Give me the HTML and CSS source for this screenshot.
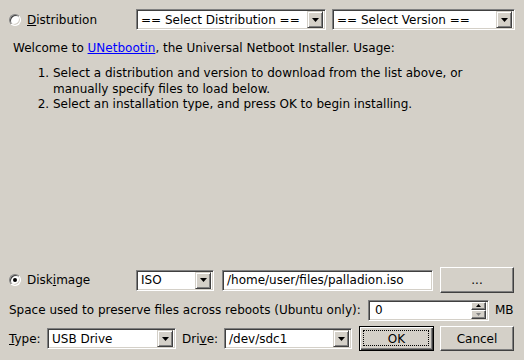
FILE: index.html
```html
<!DOCTYPE html>
<html>
<head>
<meta charset="utf-8">
<link rel="stylesheet" href="styles.css">
</head>
<body>
<div class="app">
  <div class="row row-dist">
    <label class="radio-label"><span class="radio"></span><span><u>D</u>istribution</span></label>
    <div class="combo w-dist">
      <span class="combo-text">== Select Distribution ==</span>
      <span class="combo-btn"><svg width="7" height="4" viewBox="0 0 7 4"><path d="M0 0H7L3.5 4Z" fill="#000"/></svg></span>
    </div>
    <div class="combo w-ver">
      <span class="combo-text">== Select Version ==</span>
      <span class="combo-btn"><svg width="7" height="4" viewBox="0 0 7 4"><path d="M0 0H7L3.5 4Z" fill="#000"/></svg></span>
    </div>
  </div>

  <div class="intro">
    <p>Welcome to <a class="link" href="#">UNetbootin</a>, the Universal Netboot Installer. Usage:</p>
    <ol>
      <li>Select a distribution and version to download from the list above, or manually specify files to load below.</li>
      <li>Select an installation type, and press OK to begin installing.</li>
    </ol>
  </div>

  <div class="spacer"></div>

  <div class="row row-disk">
    <label class="radio-label"><span class="radio checked"></span><span>Disk<u>i</u>mage</span></label>
    <div class="combo w-iso">
      <span class="combo-text">ISO</span>
      <span class="combo-btn"><svg width="7" height="4" viewBox="0 0 7 4"><path d="M0 0H7L3.5 4Z" fill="#000"/></svg></span>
    </div>
    <div class="field w-path">/home/user/files/palladion.iso</div>
    <div class="button w-btn">...</div>
  </div>

  <div class="row row-space">
    <span class="space-label">Space used to preserve files across reboots (Ubuntu only):</span>
    <div class="spin">
      <span class="spin-text">0</span>
      <span class="spin-btns">
        <span class="spin-btn"><svg width="5" height="3" viewBox="0 0 5 3"><path d="M0 3H5L2.5 0Z" fill="#000"/></svg></span>
        <span class="spin-btn"><svg width="5" height="3" viewBox="0 0 5 3"><path d="M0 0H5L2.5 3Z" fill="#808080"/></svg></span>
      </span>
    </div>
    <span class="mb">MB</span>
  </div>

  <div class="row row-type">
    <span class="type-label"><u>T</u>ype:</span>
    <div class="combo w-usb">
      <span class="combo-text">USB Drive</span>
      <span class="combo-btn"><svg width="7" height="4" viewBox="0 0 7 4"><path d="M0 0H7L3.5 4Z" fill="#000"/></svg></span>
    </div>
    <span class="drive-label">Dri<u>v</u>e:</span>
    <div class="combo w-drive">
      <span class="combo-text">/dev/sdc1</span>
      <span class="combo-btn"><svg width="7" height="4" viewBox="0 0 7 4"><path d="M0 0H7L3.5 4Z" fill="#000"/></svg></span>
    </div>
    <div class="button default w-ok">OK</div>
    <div class="button w-cancel">Cancel</div>
  </div>
</div>
</body>
</html>
```

FILE: styles.css
```css
* { box-sizing: border-box; }
html, body { margin: 0; padding: 0; }
body {
  background: #d4d0c8;
  font-family: "DejaVu Sans", sans-serif;
  font-size: 12px;
  color: #000;
  width: 524px;
  height: 360px;
  overflow: hidden;
}
.app {
  display: flex;
  flex-direction: column;
  height: 360px;
  padding: 9px 10px 9px 9px;
}
.row { display: flex; align-items: center; flex: none; }
.row-dist { height: 21px; }

.radio-label {
  width: 127px;
  flex: none;
  display: flex;
  align-items: center;
  gap: 6px;
  line-height: 14px;
}
.radio {
  position: relative;
  width: 12px;
  height: 12px;
  border-radius: 50%;
  background: #fff;
  border: 1px solid;
  border-color: #808080 #fff #fff #808080;
  box-shadow: inset 1px 1px 0 #404040, inset -1px -1px 0 #d4d0c8;
  flex: none;
}
.radio.checked::after {
  content: "";
  position: absolute;
  left: 3px;
  top: 3px;
  width: 4px;
  height: 4px;
  border-radius: 50%;
  background: #000;
}

.combo, .field, .spin {
  height: 21px;
  background: #fff;
  border: 1px solid;
  border-color: #808080 #fff #fff #808080;
  box-shadow: inset 1px 1px 0 #404040, inset -1px -1px 0 #d4d0c8;
  flex: none;
  display: flex;
  align-items: center;
  padding: 2px;
  white-space: nowrap;
  overflow: hidden;
}
.combo-text, .spin-text {
  flex: 1;
  padding-left: 2px;
  overflow: hidden;
}
.combo-btn {
  width: 16px;
  height: 17px;
  flex: none;
  background: #d4d0c8;
  border: 1px solid;
  border-color: #d4d0c8 #404040 #404040 #d4d0c8;
  box-shadow: inset 1px 1px 0 #fff, inset -1px -1px 0 #808080;
  display: flex;
  align-items: center;
  justify-content: center;
}
.combo-btn svg { display: block; }

.w-dist { width: 190px; }
.w-ver { width: 183px; margin-left: 6px; }

.intro { margin-top: 11px; padding-left: 4px; flex: none; }
.intro p { margin: 0; line-height: 15px; }
.link { color: #0000ff; text-decoration: underline; }
.intro ol { margin: 10px 0 0; padding-left: 40px; line-height: 15.5px; }

.spacer { flex: 1; }

.row-disk { height: 26px; }
.w-iso { width: 78px; }
.w-path { width: 211px; margin-left: 8px; padding-left: 4px; }
.button {
  height: 26px;
  flex: none;
  background: #d4d0c8;
  border: 1px solid;
  border-color: #fff #404040 #404040 #fff;
  box-shadow: inset -1px -1px 0 #808080;
  display: flex;
  align-items: center;
  justify-content: center;
  position: relative;
}
.w-btn { width: 74px; margin-left: 7px; }

.row-space { height: 22px; margin-top: 6px; }
.space-label { width: 359px; flex: none; }
.spin { width: 121px; padding-right: 2px; }
.spin-text { padding-left: 4px; }
.spin-btns { display: flex; flex-direction: column; width: 15px; height: 17px; flex: none; }
.spin-btn {
  flex: 1;
  background: #d4d0c8;
  border: 1px solid;
  border-color: #fff #404040 #404040 #fff;
  box-shadow: inset -1px -1px 0 #808080;
  display: flex;
  align-items: center;
  justify-content: center;
}
.spin-btn svg { display: block; }
.mb { margin-left: 6px; }

.row-type { height: 25px; margin-top: 5px; }
.type-label { width: 38px; flex: none; }
.w-usb { width: 129px; }
.drive-label { width: 42px; margin-left: 6px; flex: none; }
.w-drive { width: 128px; }
.w-ok { width: 75px; height: 25px; margin-left: 7px; }
.w-cancel { width: 74px; height: 25px; margin-left: 6px; }
.button.default {
  border: 1px solid #000;
  box-shadow: inset 1px 1px 0 #fff, inset -1px -1px 0 #404040, inset -2px -2px 0 #808080;
}
.button.default::after {
  content: "";
  position: absolute;
  left: 3px;
  top: 3px;
  right: 4px;
  bottom: 4px;
  border: 1px dotted #000;
}
```
